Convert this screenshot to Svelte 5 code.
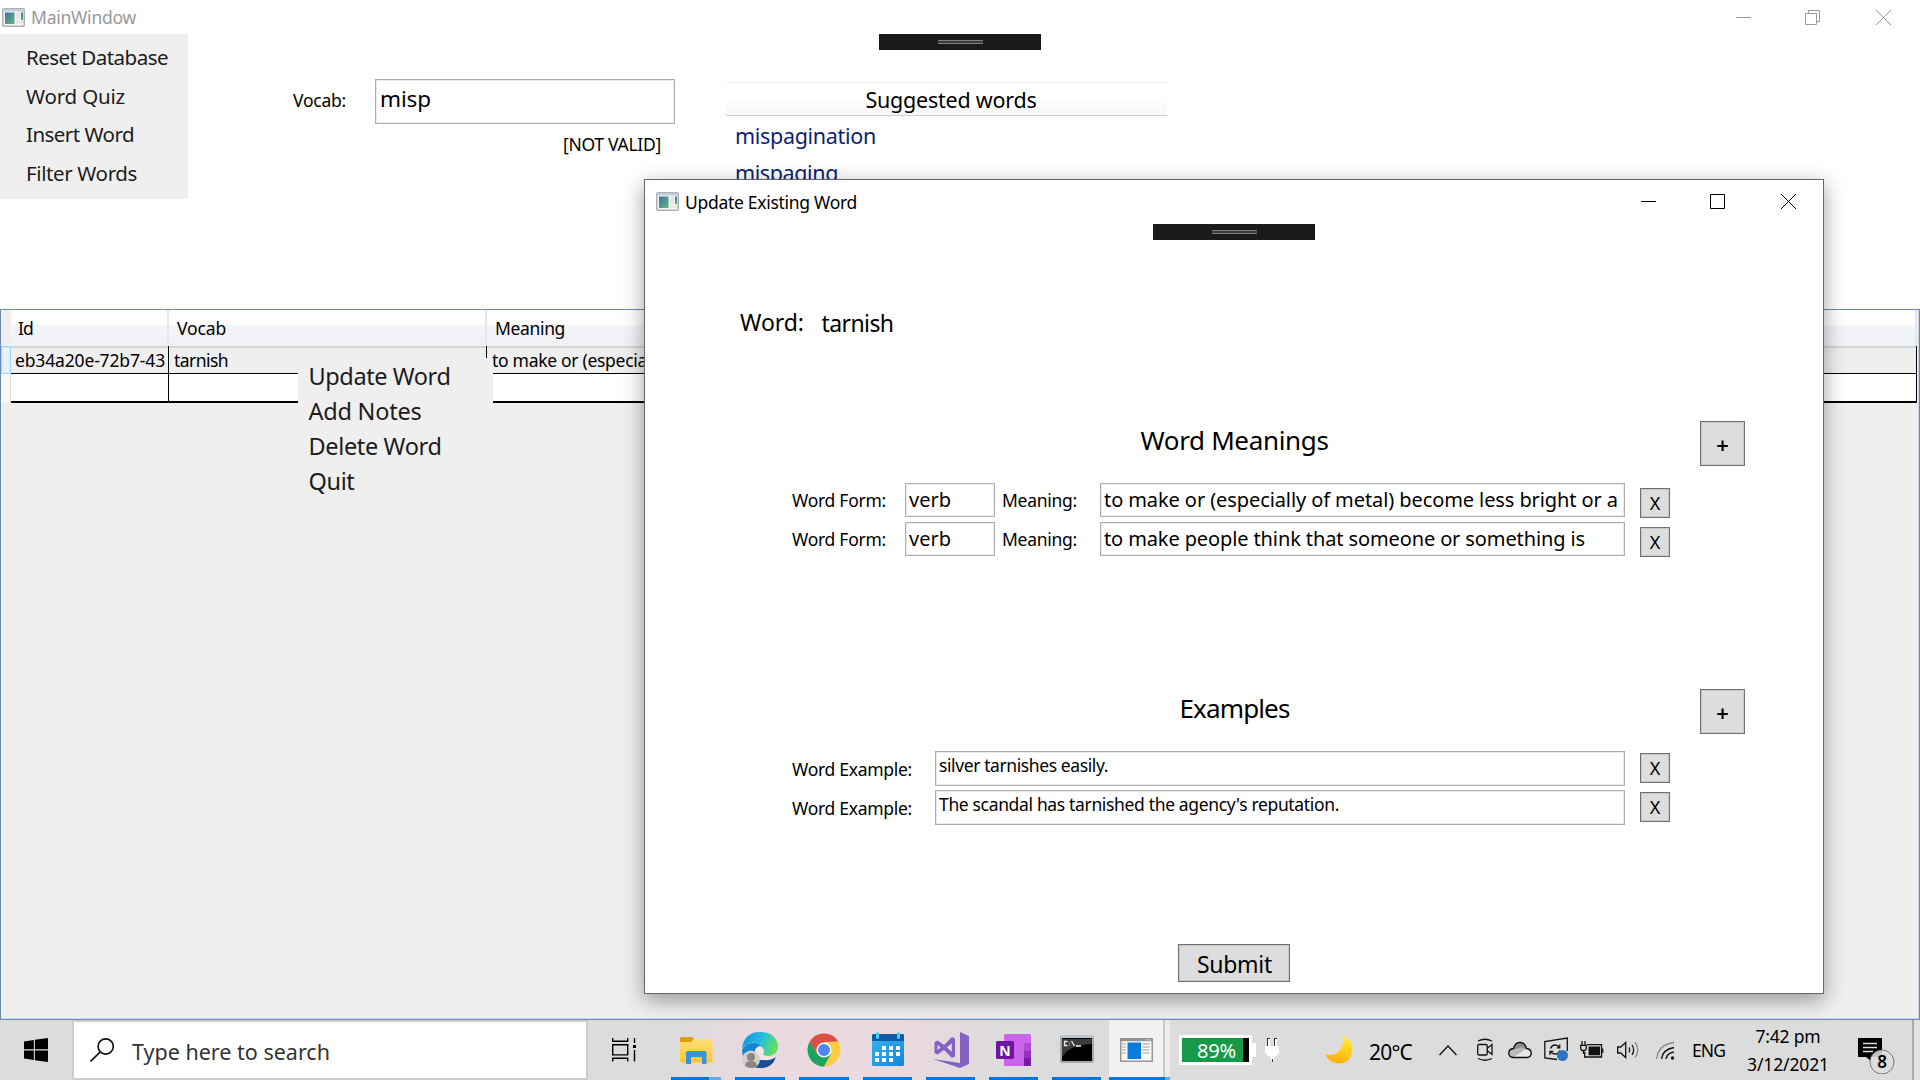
<script>
  // Spreads the letters of a label so that its ink spans the given width in pixels.
  function fit(node, width) {
    const natural = node.getBoundingClientRect().width;
    node.style.letterSpacing = `${(width + 1 - natural) / node.textContent.length}px`;
  }

  const menu = [
    ['Reset Database', 141],
    ['Word Quiz', 98],
    ['Insert Word', 107],
    ['Filter Words', 110]
  ];
  const contextMenu = [
    ['Update Word', 141],
    ['Add Notes', 112],
    ['Delete Word', 132],
    ['Quit', 45]
  ];
  const meanings = [
    { form: 'verb', text: 'to make or (especially of metal) become less bright or a', width: 513 },
    { form: 'verb', text: 'to make people think that someone or something is', width: 480 }
  ];
  const examples = [
    { text: 'silver tarnishes easily.', width: 168 },
    { text: "The scandal has tarnished the agency's reputation.", width: 399 }
  ];
</script>

{#snippet appIcon()}
  <svg class="app-icon" width="23" height="19" viewBox="0 0 23 19">
    <defs>
      <linearGradient id="pane" x1="0" y1="0" x2="1" y2="1">
        <stop offset="0" stop-color="#3f6fa8" /><stop offset="1" stop-color="#62b878" />
      </linearGradient>
    </defs>
    <rect x=".75" y=".75" width="21.5" height="17.5" rx="1" fill="#f4f5f6" stroke="#a9b0b7" stroke-width="1.5" />
    <rect x="1" y="1" width="21" height="2.5" fill="#c5ccd6" />
    <rect x="3" y="4.5" width="9.5" height="11.5" fill="url(#pane)" />
    <rect x="14" y="4.5" width="4" height="6.5" fill="#e4e6e8" />
    <rect x="19" y="4.5" width="2" height="7.5" fill="url(#pane)" />
    <rect x="14" y="12.5" width="7" height="3.5" fill="#e8e8e8" />
  </svg>
{/snippet}

{#snippet grip()}
  <svg width="45" height="4" viewBox="0 0 45 4"><path d="M0 .5h45M0 3.5h45" stroke="#808080" /><path d="M0 2h45" stroke="#3a3a3a" stroke-width="2" /></svg>
{/snippet}

<div class="desktop">
  <main class="main-window">
    <header class="titlebar">
      {@render appIcon()}
      <span class="title" use:fit={104}>MainWindow</span>
      <svg class="controls" width="155" height="15" viewBox="0 0 155 15" fill="none" stroke="#999">
        <path d="M0 7.5h15M69.500 3.500h11v11h-11zM72.500 3.500v-3h11v11h-3M140 0l15 15M155 0l-15 15" />
      </svg>
    </header>

    <section class="top">
      <nav class="menu">
        {#each menu as [label, width]}
          <div><span use:fit={width}>{label}</span></div>
        {/each}
      </nav>
      <div class="form">
        <div class="vocab-row">
          <label><span use:fit={52}>Vocab:</span></label>
          <div class="box vocab-input"><span use:fit={50}>misp</span></div>
        </div>
        <div class="status"><span use:fit={97}>[NOT VALID]</span></div>
      </div>
      <div class="suggestions">
        <div class="suggest-head"><span use:fit={170}>Suggested words</span></div>
        <div class="suggest-item"><span use:fit={140}>mispagination</span></div>
        <div class="suggest-item"><span use:fit={102}>mispaging</span></div>
      </div>
    </section>

    <section class="grid">
      <div class="row head">
        <div class="rh"></div>
        <div class="cell"><span use:fit={14}>Id</span></div>
        <div class="cell"><span use:fit={48}>Vocab</span></div>
        <div class="cell"><span use:fit={69}>Meaning</span></div>
      </div>
      <div class="row data">
        <div class="rh current"></div>
        <div class="cell"><span use:fit={149}>eb34a20e-72b7-43</span></div>
        <div class="cell"><span use:fit={53}>tarnish</span></div>
        <div class="cell"><span use:fit={154}>to make or (especia</span></div>
      </div>
      <div class="row data blank">
        <div class="rh"></div>
        <div class="cell"></div>
        <div class="cell"></div>
        <div class="cell"></div>
      </div>
    </section>
  </main>

  <div class="debug-bar outer">{@render grip()}</div>

  <div class="context-menu">
    {#each contextMenu as [label, width]}
      <div><span use:fit={width}>{label}</span></div>
    {/each}
  </div>

  <section class="dialog">
    <header class="titlebar">
      {@render appIcon()}
      <span class="title" use:fit={171}>Update Existing Word</span>
      <svg class="controls" width="155" height="15" viewBox="0 0 155 15" fill="none" stroke="#000">
        <path d="M0 7.5h15M69.500 .5h14v14h-14zM140 0l15 15M155 0l-15 15" />
      </svg>
    </header>

    <div class="word-row">
      <div class="word-label"><span use:fit={63}>Word:</span></div>
      <div class="word-value"><span use:fit={71}>tarnish</span></div>
    </div>

    <div class="section-head">
      <h2><span use:fit={187}>Word Meanings</span></h2>
      <button class="add">+</button>
    </div>
    {#each meanings as m}
      <div class="meaning-row">
        <div class="label"><span use:fit={93}>Word Form:</span></div>
        <div class="box"><span use:fit={41}>{m.form}</span></div>
        <div class="label second"><span use:fit={74}>Meaning:</span></div>
        <div class="box"><span use:fit={m.width}>{m.text}</span></div>
        <button class="remove">X</button>
      </div>
    {/each}

    <div class="section-head examples">
      <h2><span use:fit={109}>Examples</span></h2>
      <button class="add">+</button>
    </div>
    {#each examples as e}
      <div class="example-row">
        <div class="label"><span use:fit={119}>Word Example:</span></div>
        <div class="box"><span use:fit={e.width}>{e.text}</span></div>
        <button class="remove">X</button>
      </div>
    {/each}

    <button class="submit"><span use:fit={74}>Submit</span></button>
    <div class="debug-bar inner">{@render grip()}</div>
  </section>

  <footer class="taskbar">
    <div class="start">
      <svg width="24" height="24" viewBox="0 0 24 24"><path d="M0 3.400L9.800 2v9.300H0zM10.900 1.800L24 0v11.300H10.900zM0 12.500h9.800V22L0 20.600zM10.900 12.500H24V24l-13.100-1.800z" /></svg>
    </div>
    <div class="search">
      <svg width="24" height="24" viewBox="0 0 24 24" fill="none" stroke="#111" stroke-width="1.6"><circle cx="15.700" cy="8.500" r="7.600" /><path d="M10.300 13.900L.5 23.500" /></svg>
      <span use:fit={197}>Type here to search</span>
    </div>
    <div class="task-view">
      <svg width="24" height="24" viewBox="0 0 24 24" fill="none" stroke="#000" stroke-width="1.400"><path d="M.7 0v3.300h15V0M.7 6.700h15v10.200h-15zM.7 23.500v-3.300h15v3.300M22.500 0v5M22.500 12v11.500" /><path d="M22.500 7v3" stroke-width="3" /></svg>
    </div>

    <div class="app">
      <svg width="36" height="36" viewBox="0 0 36 36">
        <defs><linearGradient id="folder" x1="0" y1="0" x2="0" y2="1"><stop offset="0" stop-color="#ffdf7d" /><stop offset="1" stop-color="#fbc62d" /></linearGradient></defs>
        <path d="M2 6.500Q2 5 3.500 5H14l3 3-3 4H2z" fill="#dc9d0b" />
        <path d="M2 10h11l3-3h17q1.500 0 1.500 1.500V29q0 1.500-1.500 1.500H3.500Q2 30.500 2 29z" fill="url(#folder)" />
        <path d="M8 32V21q0-2 2-2h16.500q2 0 2 2v11H24v-6q0-1-1-1h-9q-1 0-1 1v6z" fill="#3992dc" />
      </svg>
      <i class="line split"></i>
    </div>
    <div class="app">
      <svg width="36" height="36" viewBox="0 0 36 36">
        <defs>
          <linearGradient id="edgeTop" x1="0" y1=".3" x2="1" y2=".6"><stop offset="0" stop-color="#1595dd" /><stop offset=".5" stop-color="#27bfe0" /><stop offset="1" stop-color="#68e251" /></linearGradient>
          <linearGradient id="edgeSide" x1="0" y1="0" x2="1" y2="1"><stop offset="0" stop-color="#1792de" /><stop offset="1" stop-color="#0b55a8" /></linearGradient>
        </defs>
        <path d="M0 18Q5 9 14 11q6 1 7 6-9-2-8 6 1 7 10 8 6 1 10-3-5 8-15 8Q1 36 0 18z" fill="url(#edgeSide)" />
        <path d="M0 17Q2 0 18 0q16 0 18 14 0 9-9 10-5 0-6-2 2-4-1-7Q10 5 0 17z" fill="url(#edgeTop)" />
        <path d="M18 20q1 6 8 7 5 0 8-2-4 11-15 11-4 0-6-3z" fill="#124d95" />
        <path d="M18 14q-6 1-5 8 2 7 9 6 8 1 13-4-8 2-14-1 0-2 1-4-1-4-4-5z" fill="#f0e4e7" />
        <circle cx="9" cy="27.500" r="9" fill="#d3cfcc" /><circle cx="9" cy="25" r="4" fill="#8a8583" /><path d="M3 34q0-5 6-5t6 5q-5 4-12 0z" fill="#8a8583" />
      </svg>
      <i class="line"></i>
    </div>
    <div class="app">
      <svg width="34" height="34" viewBox="-17 -17 34 34">
        <path d="M0 0L-14.300-8.200A16.500 16.500 0 0 1 14.300-8.200L0-8z" fill="#dd4f43" />
        <path d="M14.300-8.200A16.500 16.500 0 0 1 0 16.500L7 4-1-8z" fill="#ffcd41" />
        <path d="M0 16.500A16.500 16.500 0 0 1-14.300-8.200L-7 4 7 4z" fill="#1da362" />
        <path d="M-14.300-8.200L0-8v8l-7 4z" fill="#dd4f43" /><path d="M-14.300-8.200L-7 4l4 3-8-2z" fill="#1da362" />
        <circle r="7.600" fill="#fff" /><circle r="6" fill="#4f86f3" />
      </svg>
      <i class="line"></i>
    </div>
    <div class="app narrow">
      <svg width="34" height="36" viewBox="0 1 34 36">
        <defs><linearGradient id="cal" x1="0" y1="0" x2="1" y2="1"><stop offset="0" stop-color="#37b5ee" /><stop offset="1" stop-color="#1686dc" /></linearGradient></defs>
        <rect x="1" y="3" width="32" height="32" rx="1.500" fill="url(#cal)" /><path d="M1 10V4.500Q1 3 2.500 3h29Q33 3 33 4.500V10z" fill="#0d5aa8" />
        <path d="M6.500 2.500v4M27.500 2.500v4" stroke="#44d0f5" stroke-width="3" stroke-linecap="round" />
        <path d="M11 17h4m3 0h4m3 0h4M4 23h4m3 0h4m3 0h4m3 0h4M4 29h4m3 0h4m3 0h4" stroke="#fff" stroke-width="4" />
      </svg>
      <i class="line"></i>
    </div>
    <div class="app narrow">
      <svg width="36" height="36" viewBox="0 0 36 36">
        <path d="M27 0l9 4v28l-9 4z" fill="#8661c5" /><path d="M0 27l27 4v5z" fill="#8661c5" />
        <path fill-rule="evenodd" d="M1.500 10l3-1.500L11 13l8-8 3 1.500v18L19 26l-8-8-6.500 4.500-3-1.500zM4.500 12.800v5.400l3-2.700zM13.800 15.500l5 4.200v-8.400z" fill="#8661c5" />
      </svg>
      <i class="line"></i>
    </div>
    <div class="app narrow">
      <svg width="36" height="36" viewBox="0 0 36 36">
        <rect x="8" y="2" width="27" height="32" rx="1.500" fill="#ca64ea" /><path d="M28 11h7v7.500h-7z" fill="#ae4bd5" /><path d="M28 18.500h7V26h-7z" fill="#9332bf" /><path d="M28 26h7v8h-7z" fill="#7719aa" />
        <rect x="0" y="9" width="18" height="18" rx="1.500" fill="#6c179e" />
        <text x="9" y="23.500" text-anchor="middle" class="note">N</text>
      </svg>
      <i class="line"></i>
    </div>
    <div class="app narrow cmd">
      <svg width="34" height="28" viewBox="0 0 34 28">
        <rect x="1" y="1" width="32" height="26" rx="1" fill="#000" stroke="#a3a9b0" stroke-width="2" /><path d="M1 1.500h32" stroke="#bcc4cc" stroke-width="3" />
        <path d="M2 4h30v5Q9 10 3 21H2z" fill="#3c3c3c" />
        <path d="M7.500 6.500H4.500v4h3M9.500 7.500v.8M9.500 9.800v.8M11.500 6l3 5M16 11h5" stroke="#eee" fill="none" stroke-width="1.300" />
      </svg>
      <i class="line"></i>
    </div>
    <div class="app active">
      <svg width="33" height="24" viewBox="0 0 33 24">
        <rect x=".75" y=".75" width="31.500" height="22.500" fill="#fafafa" stroke="#969696" stroke-width="1.500" /><path d="M0 1.700h33" stroke="#8e9294" stroke-width="3" /><path d="M25 1.700h6" stroke="#c9cccd" stroke-width="1.500" stroke-dasharray="1.500 1" />
        <rect x="7.500" y="4.500" width="13.500" height="16.500" fill="#087bdc" />
        <path d="M2 6h4M2 9h4M2 12h4M2 15h4M22.500 6h7M22.500 9h7M22.500 12h7M22.500 15h7" stroke="#9a9a9a" />
      </svg>
      <i class="line"></i>
    </div>
    <div class="stack"><i class="line"></i></div>

    <div class="tray">
      <div>
        <div class="charge"><div class="level"><span use:fit={38}>89%</span></div><b></b></div>
      </div>
      <div>
        <svg width="14" height="24" viewBox="0 0 14 24"><path d="M2 0h3v8h4V0h3v8h2v6q-1 4-5 5v4H6v-4q-5-1-6-5V8h2z" fill="#fff" /><path d="M2.500 0v8M9.500 0v8M2 .5h3M9 .5h3M7.500 21v3" stroke="#333" /></svg>
      </div>
      <div>
        <svg width="28" height="28" viewBox="0 0 28 28"><defs><linearGradient id="moon" x1=".8" y1="0" x2=".5" y2="1"><stop offset="0" stop-color="#fff12e" /><stop offset="1" stop-color="#ffae0f" /></linearGradient></defs><path d="M17 0q11 4 10.500 14-1 13-14 13.500Q4 27 0 18q9 3 15-4 5-7 2-14z" fill="url(#moon)" /></svg>
      </div>
      <div class="temp"><span use:fit={42}>20°C</span></div>
      <div><svg width="18" height="12" viewBox="0 0 18 12" fill="none" stroke="#111" stroke-width="1.300"><path d="M.5 11L9 2l8.500 9" /></svg></div>
      <div>
        <svg width="18" height="24" viewBox="0 0 18 24" fill="none" stroke="#111" stroke-width="1.300"><path d="M2 3Q9-.5 16 3M2 20.500q7 3.500 14 0M11 10.500l5-4v10l-5-4" /><rect x="1.700" y="6.500" width="9.500" height="10.500" rx="1.300" /></svg>
      </div>
      <div>
        <svg width="24" height="18" viewBox="0 0 24 18"><path d="M5 16.500Q.8 16 .8 12T5.500 7.500Q7 1 12.500 1.500q5 .5 6 6Q23.200 8 23.200 12T19 16.500z" fill="#e9e9e9" /><path d="M1 12q.5-4.500 4.500-4.500Q7 1 12.500 1.500q5 .5 6 6-5 1-8 4.500z" fill="#8d8d8d" /><path d="M5 16.500L18 8Q13 5 8 8 1 8 1 12q0 4 4 4.500z" fill="#b9b9b9" /><path d="M5 16.500Q.8 16 .8 12T5.500 7.500Q7 1 12.500 1.500q5 .5 6 6Q23.200 8 23.200 12T19 16.500z" fill="none" stroke="#111" stroke-width="1.400" /></svg>
      </div>
      <div>
        <svg width="26" height="26" viewBox="0 0 26 26" fill="none" stroke="#111" stroke-width="1.300"><path d="M13 22.500L.8 21V4.500L23.300 1v13" /><path d="M6.500 11.500Q8 8 11 8q3 0 4.500 2.500M15.700 7.500v3.300h-3M16 13.500q-1.500 3.500-5 3.500-3 0-4.500-2.500M6 18v-3.500h3.300" /><circle cx="18.500" cy="18.500" r="5.500" fill="#2f73bd" stroke="none" /></svg>
      </div>
      <div>
        <svg width="24" height="18" viewBox="0 0 24 18" fill="none" stroke="#111" stroke-width="1.300"><path d="M7 3.700h14.500v12.300H4.700v-5" /><rect x="8.500" y="5.500" width="11.500" height="8.800" fill="#111" stroke="none" /><path d="M22.700 7.500v4.500M2 0v4M5 0v4M.7 4.300h5.600v3.500L5 9.500H2L.7 7.800zM3.500 9.500V13" /></svg>
      </div>
      <div>
        <svg width="23" height="20" viewBox="0 0 23 20" fill="none" stroke="#111" stroke-width="1.300"><path d="M.7 7v6h3l5 4.500v-15l-5 4.500zM12 7.500q1.500 2.500 0 5M15 5q3.300 5 0 10" /><path d="M18 2.500q5.500 7.500 0 15" stroke="#888" /></svg>
      </div>
      <div class="wifi">
        <svg width="20" height="20" viewBox="0 0 20 20" fill="none" stroke-width="1.400"><path d="M.7 18Q2 3.500 18 1.500" stroke="#8e8e8e" /><path d="M5.500 18Q6.500 8.500 18 6.500M10 18q1-6 8-7" stroke="#111" /><circle cx="16.500" cy="17" r="1.700" fill="#111" /></svg>
      </div>
      <div class="lang"><span use:fit={32}>ENG</span></div>
      <div class="clock"><span use:fit={64}>7:42 pm</span><span use:fit={81}>3/12/2021</span></div>
      <div class="notice">
        <svg width="37" height="37" viewBox="0 0 37 37"><path d="M0 1h24v19H13v4l-5-4H0z" fill="#000" /><path d="M5 6.500h14M5 10.500h14M5 14.500h10" stroke="#ddd" stroke-width="1.400" /><circle cx="24" cy="25" r="12" fill="#ddd" fill-opacity=".88" stroke="#777" /><text x="24" y="31" text-anchor="middle" class="count">8</text></svg>
      </div>
      <div class="peek"></div>
    </div>
  </footer>
</div>

<style>
  :global(body) { margin: 0; background: #fff; }
  .desktop, .desktop * { box-sizing: border-box; }
  .desktop { position: relative; width: 1920px; height: 1080px; overflow: hidden; display: flex; flex-direction: column; font: 17.500px 'Noto Sans', 'Open Sans', sans-serif; color: #000; white-space: nowrap; }
  svg { display: block; flex: none; }
  button { margin: 0; padding: 0; font: inherit; color: #000; background: #ddd; border: 1px solid #707070; box-shadow: inset 0 0 0 1px #c8c8c8; display: flex; align-items: center; justify-content: center; }
  .box { background: #fff; border: 1px solid #abadb3; box-shadow: inset 0 0 0 1px #ebebed; overflow: hidden; padding-left: 3px; }

  .titlebar { display: flex; align-items: center; }
  .controls { margin-left: auto; }
  .title { margin-left: 6px; }

  .main-window { height: 1020px; display: flex; flex-direction: column; }
  .main-window .titlebar { height: 34px; padding: 0 29px 0 2px; color: #999; }
  .top { display: flex; align-items: flex-start; height: 275px; }
  .menu { width: 188px; height: 165px; padding: 4.400px 0 0 26px; background: #efefef; font-size: 20.500px; line-height: 38.500px; color: #1c1c1c; }
  .form { width: 383px; margin: 45px 0 0 105px; }
  .vocab-row { display: flex; height: 45px; }
  .vocab-row label { width: 82px; line-height: 42px; }
  .vocab-input { width: 300px; font-size: 22.500px; line-height: 37px; padding-left: 4px; }
  .status { line-height: 30px; margin-top: 5px; padding-right: 15px; text-align: right; }
  .suggestions { width: 441px; margin: 48px 0 0 50px; font-size: 21.500px; }
  .suggest-head { height: 34px; line-height: 34px; padding-left: 9px; text-align: center; border-top: 1px solid #efefef; border-bottom: 1px solid #d0d0d0; background: linear-gradient(#fff 45%, #f7f7f8); margin-bottom: 1px; }
  .suggest-item { height: 37px; line-height: 37px; padding-left: 9px; color: #0c1f74; }

  .grid { flex: 1; border: 1px solid #688caf; box-shadow: inset -1px -1px 0 #c8d6e6; background: #efefef; }
  .row { display: grid; grid-template-columns: 10px 158px 318px 1fr; margin-right: 2px; }
  .head { height: 36px; line-height: 36px; }
  .head .cell { padding-left: 8px; background: linear-gradient(#fff 0 40%, #f4f5f8 41%, #f0f1f4); border-right: 2px solid #e6e7e9; border-bottom: 2px solid #d5d6d9; }
  .head .cell:nth-child(2) { padding-left: 7px; }
  .data { height: 28px; line-height: 28px; }
  .data .cell { border-right: 1px solid #000; border-bottom: 1px solid #000; padding-left: 4px; overflow: hidden; }
  .data .rh { border-right: 1px solid #ddd; }
  .data .cell:nth-child(3) { padding-left: 5px; }
  .data .cell:nth-child(4) { padding-left: 5px; }
  .data .rh.current { border: 1px solid #99d9f5; box-shadow: inset 0 0 0 1px #d8effa; background: #e9f1f8; }
  .blank { height: 29px; }
  .blank .cell { background: #fff; border-bottom-width: 2px; }
  .blank .rh { background: #f8f8f8; }

  .debug-bar { position: absolute; width: 162px; height: 16px; background: #1a1a1a; display: flex; align-items: center; justify-content: center; }
  .debug-bar.outer { left: 879px; top: 34px; }
  .debug-bar.inner { left: 508px; top: 44px; }

  .context-menu { position: absolute; left: 298px; top: 358px; width: 195px; height: 152px; padding: 1px 0 0 10.500px; background: #efefef; font-size: 23.500px; line-height: 35px; color: #1c1c1c; }

  .dialog { position: absolute; left: 644px; top: 179px; width: 1180px; height: 815px; background: #fff; border: 1px solid #666; box-shadow: 0 6px 20px rgba(0, 0, 0, .38); display: flex; flex-direction: column; }
  .dialog .titlebar { height: 43px; padding: 0 27px 0 11px; }
  .word-row { display: flex; margin-top: 79px; padding-left: 95px; height: 40px; line-height: 40px; font-size: 23px; }
  .word-label { width: 81.500px; }
  .word-value { padding-top: 1px; }
  .section-head { display: flex; height: 45px; margin-top: 79px; padding: 0 78px 0 124px; }
  .section-head.examples { margin-top: 128px; }
  .section-head h2 { flex: 1; margin: 0; text-align: center; font-size: 26px; font-weight: 400; line-height: 38px; }
  .section-head + div { margin-top: 17px; }
  .add { width: 45px; height: 45px; font-size: 22px; font-weight: 600; }
  .meaning-row { display: grid; grid-template-columns: 113px 90px 105px 525px 30px; padding-left: 147px; height: 39px; flex: none; }
  .meaning-row .box { height: 34px; line-height: 31px; font-size: 20px; }
  .meaning-row .label { line-height: 34px; }
  .meaning-row .second { padding-left: 7px; }
  .remove { width: 30px; height: 30px; margin: 5px 0 0 15px; font-size: 18px; }
  .example-row { display: grid; grid-template-columns: 143px 690px 30px; padding-left: 147px; height: 39px; flex: none; }
  .example-row .box { height: 35px; line-height: 26px; }
  .example-row .label { line-height: 36px; }
  .example-row .remove { margin-top: 2px; }
  .submit { width: 112px; height: 38px; margin: 115px auto 0; padding: 2px 0 0 1px; font-size: 23px; }

  .taskbar { display: flex; height: 60px; background: linear-gradient(90deg, #dcdcdc 680px, #ead9de 760px, #ead9de 900px, #dcdcdc 1010px); }
  .start, .task-view { width: 72px; display: flex; align-items: center; justify-content: center; }
  .search { width: 516px; border: 2px solid #ccc; background: #fff; display: flex; align-items: center; padding-left: 16px; gap: 18px; font-size: 21.500px; color: #333; }
  .search span { padding-top: 3px; }
  .task-view { width: 76px; padding-right: 4px; }
  .app { width: 64px; display: grid; grid-template-rows: 57px 3px; place-items: center; padding: 0 7px; }
  .app svg { margin-top: 3px; }
  .app.narrow { width: 63px; }
  .app.cmd svg { margin-top: 1px; }
  .line { display: block; width: 100%; height: 3px; background: #0078d7; }
  .line.split { background: linear-gradient(90deg, #0078d7 38px, #62abe8 38px); }
  .app.active { width: 54px; margin-left: 1px; padding: 0; background: #f1f1f1; }
  .app.active svg { margin-top: 2px; margin-left: 1px; }
  .stack { width: 7px; display: flex; align-items: flex-end; background: linear-gradient(90deg, #c9c9c9 2px, #ececec 2px); }
  .stack .line { background: linear-gradient(90deg, #0078d7 2px, #62abe8 2px); }
  .note { font: 700 14px 'Noto Sans', sans-serif; fill: #fff; }

  .tray { flex: 1; padding-left: 9px; display: grid; grid-template-columns: 86px 60px 44px 70px 37px 32px 36px 36px 37px 39px 36px 54px 112px 54px 8px; }
  .tray > div { display: flex; align-items: center; }
  .charge { position: relative; width: 73px; height: 30px; border: 3px solid #fff; background: #000; }
  .charge b { position: absolute; left: 70px; top: 5px; width: 4px; height: 14px; background: #fff; }
  .level { width: 61px; height: 24px; padding-left: 15px; line-height: 25px; background: #179a48; color: #fff; font-size: 20px; }
  .temp { font-size: 21px; padding-top: 4px; }
  .wifi { padding-top: 2px; }
  .lang { font-size: 17.500px; }
  .tray .clock { flex-direction: column; width: 83px; line-height: 28px; padding: 2px 0 0 1px; font-size: 17.500px; }
  .notice { padding-top: 11px; }
  .count { font: 600 17px 'Noto Sans', sans-serif; }
  .tray .peek { border-left: 2px solid #aaa; background: #e2e2e2; }
</style>
